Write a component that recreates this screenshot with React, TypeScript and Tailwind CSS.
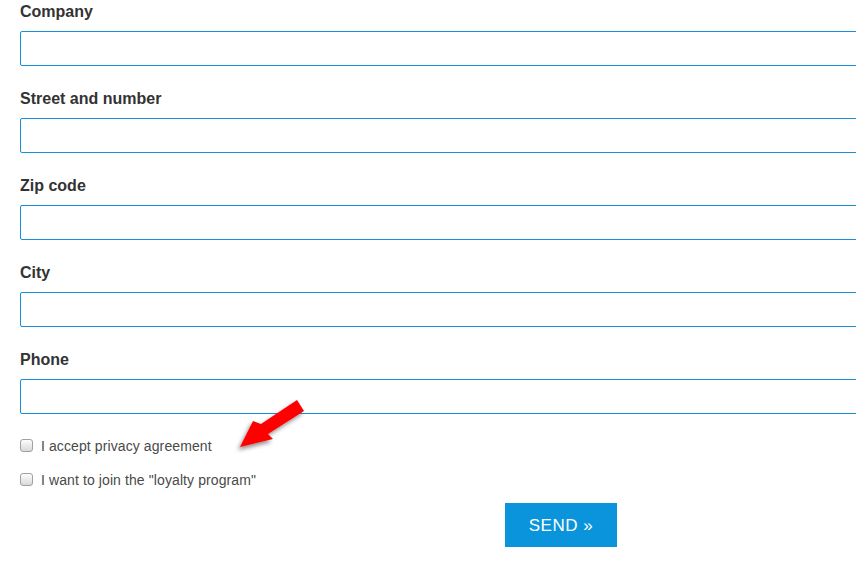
import React from "react";

const fields = ["Company", "Street and number", "Zip code", "City", "Phone"];

function Checkbox() {
  return (
    <div className="mt-[3px] h-[13px] w-[13px] shrink-0 rounded-[3px] border border-[#a0a0a0] bg-gradient-to-b from-[#fdfdfd] to-[#d9d9d9]" />
  );
}

export default function App() {
  return (
    <div
      className="relative h-[576px] w-[856px] overflow-hidden bg-white"
      style={{ fontFamily: '"Liberation Sans", Arial, sans-serif' }}
    >
      <div className="pl-[20px]">
        {fields.map((f) => (
          <div key={f} className="mb-[21px]">
            <div className="mb-[8px] h-[23px] pt-[1px] text-[16px] font-bold leading-[22px] text-[#333333]">
              {f}
            </div>
            <div className="h-[35px] w-[900px] rounded-[2px] border border-[#1590d8] bg-white" />
          </div>
        ))}
        <div className="mt-[22px] flex flex-col gap-[14px]">
          <div className="flex h-[20px] items-start gap-[8px]">
            <Checkbox />
            <span className="text-[14px] leading-[20px] tracking-[0.1px] text-[#4a4a4a]">
              I accept privacy agreement
            </span>
          </div>
          <div className="flex h-[20px] items-start gap-[8px]">
            <Checkbox />
            <span className="text-[14px] leading-[20px] tracking-[0.1px] text-[#4a4a4a]">
              I want to join the "loyalty program"
            </span>
          </div>
        </div>
        <div className="mt-[13px] pl-[485px]">
          <button className="flex h-[44px] w-[112px] items-center justify-center bg-[#0a94dc] text-[17px] leading-none tracking-[0.5px] text-white">
            SEND »
          </button>
        </div>
      </div>
      <svg
        className="absolute left-[230px] top-[395px]"
        width="80"
        height="60"
        viewBox="0 0 80 60"
      >
        <defs>
          <filter id="sh" x="-30%" y="-30%" width="160%" height="160%">
            <feDropShadow dx="-2" dy="3" stdDeviation="2" floodColor="#000" floodOpacity="0.45" />
          </filter>
        </defs>
        <polygon
          points="67,5 74,16 38,39 43,44 10,52 23,26 31,29"
          fill="#ff0000"
          filter="url(#sh)"
        />
      </svg>
    </div>
  );
}
